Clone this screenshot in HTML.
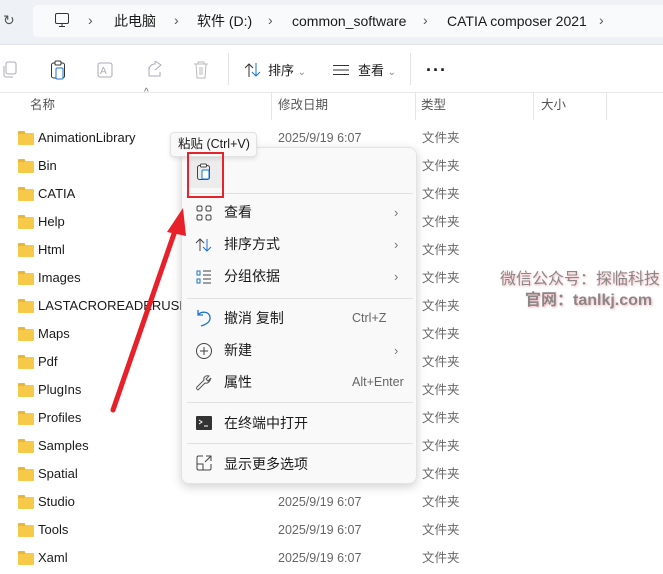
<!DOCTYPE html>
<html><head><meta charset="utf-8"><style>
*{margin:0;padding:0;box-sizing:border-box}
body{width:663px;height:574px;overflow:hidden;background:#fff;font-family:"Liberation Sans","Noto Sans CJK SC",sans-serif;position:relative;color:#1a1a1a}
.abs{position:absolute;white-space:nowrap;line-height:1}
.top{position:absolute;left:0;top:0;width:663px;height:45px;background:#eef2f7;border-bottom:1px solid #dfe3e8}
.crumb{position:absolute;left:33px;top:5px;width:640px;height:32px;background:#f8fafc;border-radius:5px}
.t14{font-size:14px}
.row{position:absolute;left:0;height:28px;width:663px;font-size:13px;line-height:28px}
.row .f{position:absolute;left:18px;top:9px;width:16px;height:12px;background:#f7c948;border-radius:1px}
.row .f:before{content:"";position:absolute;left:0;top:-2px;width:7px;height:3px;background:#eab53a;border-radius:1px 1px 0 0}
.row .n{position:absolute;left:38px;top:0}
.row .d{position:absolute;left:278px;top:0;color:#666;font-size:12.5px}
.row .ty{position:absolute;left:422px;top:0;color:#666;font-size:12.5px}
.menu{position:absolute;left:181px;top:147px;width:236px;height:337px;background:#f9f9f9;border-radius:8px;box-shadow:0 3px 10px rgba(0,0,0,.18);border:1px solid #e3e3e3}
.mi{position:absolute;left:42px;font-size:14px;color:#1a1a1a;line-height:1}
.sc{position:absolute;left:170px;font-size:12.5px;color:#666;line-height:1}
.ch{position:absolute;left:212px;font-size:13px;color:#777;line-height:1}
.sep{position:absolute;left:5px;width:226px;height:1px;background:#e0e0e0}
</style></head><body>
<div class="top"><div class="crumb"></div>
<div class="abs" style="left:3px;top:13px;font-size:14px;color:#555">↻</div>
<svg class="abs" style="left:54px;top:12px" width="16" height="16"><rect x="1.5" y="1.5" width="13" height="10" rx="1.5" fill="none" stroke="#333"/><path d="M5 14.5h6M8 12v2" stroke="#333"/></svg>
<div class="abs t14" style="left:88px;top:13px;color:#555">›</div>
<div class="abs t14" style="left:114px;top:14px">此电脑</div>
<div class="abs t14" style="left:174px;top:13px;color:#555">›</div>
<div class="abs t14" style="left:197px;top:14px">软件 (D:)</div>
<div class="abs t14" style="left:268px;top:13px;color:#555">›</div>
<div class="abs t14" style="left:292px;top:14px">common_software</div>
<div class="abs t14" style="left:423px;top:13px;color:#555">›</div>
<div class="abs t14" style="left:447px;top:14px">CATIA composer 2021</div>
<div class="abs t14" style="left:599px;top:13px;color:#555">›</div>
</div>
<!-- toolbar -->
<svg class="abs" style="left:2px;top:61px" width="16" height="18"><rect x="4" y="1" width="10" height="12" rx="2" fill="none" stroke="#aab"/><path d="M2 5v9a2 2 0 0 0 2 2h7" fill="none" stroke="#aab"/></svg>
<svg class="abs" style="left:50px;top:60px" width="16" height="20"><rect x="1.5" y="3" width="13" height="15" rx="2" fill="none" stroke="#333"/><rect x="5" y="1" width="6" height="4" rx="1" fill="#fff" stroke="#333"/><rect x="6" y="8" width="7" height="11" rx="1" fill="#fff" stroke="#1a73d0"/></svg>
<svg class="abs" style="left:97px;top:61px" width="18" height="18"><rect x="1" y="2" width="14" height="14" rx="2" fill="none" stroke="#aab"/><text x="3" y="13" font-size="10" fill="#aab" font-family="Liberation Sans">A</text></svg>
<svg class="abs" style="left:146px;top:61px" width="18" height="18"><path d="M3 6v9h11v-4M9 9l6-5-6-4v3c-4 0-6 3-6 6" fill="none" stroke="#aab"/></svg>
<svg class="abs" style="left:193px;top:60px" width="16" height="20"><path d="M1 4h14M5 4V2h6v2M3 4l1 14h8l1-14M7 7v8M9 7v8" fill="none" stroke="#bbb"/></svg>
<div class="abs" style="left:228px;top:53px;width:1px;height:32px;background:#e3e3e3"></div>
<svg class="abs" style="left:244px;top:62px" width="18" height="16" fill="none"><path d="M5 15V2M1 6l4-4 4 4" stroke="#333"/><path d="M12 1v13M8 10l4 4 4-4" stroke="#1a73d0"/></svg>
<div class="abs" style="left:268px;top:64px;font-size:13px">排序 <span style="color:#888;font-size:10px">⌄</span></div>
<svg class="abs" style="left:333px;top:64px" width="16" height="12" stroke="#333"><path d="M0 1.5h16M0 6h16M0 10.5h16"/></svg>
<div class="abs" style="left:358px;top:64px;font-size:13px">查看 <span style="color:#888;font-size:10px">⌄</span></div>
<div class="abs" style="left:410px;top:53px;width:1px;height:32px;background:#e3e3e3"></div>
<div class="abs" style="left:426px;top:61px;font-size:18px;font-weight:bold;letter-spacing:1px">···</div>
<div class="abs" style="left:0;top:92px;width:663px;height:1px;background:#e8e8e8"></div>
<!-- header -->
<div class="abs" style="left:144px;top:88px;font-size:10px;color:#666">^</div>
<div class="abs" style="left:30px;top:99px;font-size:12.5px;color:#555">名称</div>
<div class="abs" style="left:278px;top:99px;font-size:12.5px;color:#555">修改日期</div>
<div class="abs" style="left:421px;top:99px;font-size:12.5px;color:#555">类型</div>
<div class="abs" style="left:541px;top:99px;font-size:12.5px;color:#555">大小</div>
<div class="abs" style="left:271px;top:92px;width:1px;height:28px;background:#e5e5e5"></div>
<div class="abs" style="left:415px;top:92px;width:1px;height:28px;background:#e5e5e5"></div>
<div class="abs" style="left:533px;top:92px;width:1px;height:28px;background:#e5e5e5"></div>
<div class="abs" style="left:606px;top:92px;width:1px;height:28px;background:#e5e5e5"></div>
<!-- rows -->
<div class="row" style="top:124px"><div class="f"></div><div class="n">AnimationLibrary</div><div class="d">2025/9/19 6:07</div><div class="ty">文件夹</div></div>
<div class="row" style="top:152px"><div class="f"></div><div class="n">Bin</div><div class="ty">文件夹</div></div>
<div class="row" style="top:180px"><div class="f"></div><div class="n">CATIA</div><div class="ty">文件夹</div></div>
<div class="row" style="top:208px"><div class="f"></div><div class="n">Help</div><div class="ty">文件夹</div></div>
<div class="row" style="top:236px"><div class="f"></div><div class="n">Html</div><div class="ty">文件夹</div></div>
<div class="row" style="top:264px"><div class="f"></div><div class="n">Images</div><div class="ty">文件夹</div></div>
<div class="row" style="top:292px"><div class="f"></div><div class="n">LASTACROREADERUSED</div><div class="ty">文件夹</div></div>
<div class="row" style="top:320px"><div class="f"></div><div class="n">Maps</div><div class="ty">文件夹</div></div>
<div class="row" style="top:348px"><div class="f"></div><div class="n">Pdf</div><div class="ty">文件夹</div></div>
<div class="row" style="top:376px"><div class="f"></div><div class="n">PlugIns</div><div class="ty">文件夹</div></div>
<div class="row" style="top:404px"><div class="f"></div><div class="n">Profiles</div><div class="ty">文件夹</div></div>
<div class="row" style="top:432px"><div class="f"></div><div class="n">Samples</div><div class="ty">文件夹</div></div>
<div class="row" style="top:460px"><div class="f"></div><div class="n">Spatial</div><div class="ty">文件夹</div></div>
<div class="row" style="top:488px"><div class="f"></div><div class="n">Studio</div><div class="d">2025/9/19 6:07</div><div class="ty">文件夹</div></div>
<div class="row" style="top:516px"><div class="f"></div><div class="n">Tools</div><div class="d">2025/9/19 6:07</div><div class="ty">文件夹</div></div>
<div class="row" style="top:544px"><div class="f"></div><div class="n">Xaml</div><div class="d">2025/9/19 6:07</div><div class="ty">文件夹</div></div>
<!-- watermark -->
<div class="abs" style="left:500px;top:272px;font-size:16px;color:#888;text-shadow:1px 1px 2px #f6b0b8">微信公众号：探临科技</div>
<div class="abs" style="left:525px;top:293px;font-size:16px;color:#888;font-weight:bold;text-shadow:1px 1px 2px #f6b0b8">官网：tanlkj.com</div>
<!-- menu -->
<div class="menu">
<div class="abs" style="left:6px;top:8px;width:35px;height:32px;background:#ececec;border-radius:4px"></div>
<svg class="abs" style="left:14px;top:15px" width="16" height="18"><rect x="1.5" y="2.5" width="12" height="14" rx="2" fill="none" stroke="#444"/><rect x="4.5" y="1" width="6" height="3" rx="1" fill="#fff" stroke="#444"/><rect x="6" y="7" width="7" height="9" rx="1" fill="#fff" stroke="#1a73d0"/></svg>
<div class="sep" style="top:45px"></div>
<svg class="abs" style="left:14px;top:57px" width="16" height="16" fill="none" stroke="#444"><rect x="1" y="1" width="5" height="5" rx="1.5"/><rect x="10" y="1" width="5" height="5" rx="1.5"/><rect x="1" y="10" width="5" height="5" rx="1.5"/><rect x="10" y="10" width="5" height="5" rx="1.5"/></svg>
<div class="mi" style="top:57px">查看</div><div class="ch" style="top:58px">›</div>
<svg class="abs" style="left:13px;top:89px" width="18" height="16" fill="none"><path d="M5 14V2M1 6l4-4 4 4" stroke="#444"/><path d="M12 2v12M8 10l4 4 4-4" stroke="#1a73d0"/></svg>
<div class="mi" style="top:89px">排序方式</div><div class="ch" style="top:90px">›</div>
<svg class="abs" style="left:14px;top:121px" width="16" height="16" fill="none"><path d="M1 2h3v4H1zM1 10h3v4H1z" stroke="#1a73d0"/><path d="M7 2h8M7 6h8M7 10h8M7 14h8" stroke="#444"/></svg>
<div class="mi" style="top:121px">分组依据</div><div class="ch" style="top:122px">›</div>
<div class="sep" style="top:150px"></div>
<svg class="abs" style="left:14px;top:161px" width="16" height="18" fill="none" stroke="#1a73d0" stroke-width="1.3"><path d="M2 1v5h5M2 6c3-4 11-4 12 2 1 5-5 8-9 9"/></svg>
<div class="mi" style="top:163px">撤消 复制</div><div class="sc" style="top:164px">Ctrl+Z</div>
<svg class="abs" style="left:13px;top:194px" width="18" height="18" fill="none" stroke="#444"><circle cx="9" cy="9" r="7.5"/><path d="M9 5v8M5 9h8"/></svg>
<div class="mi" style="top:195px">新建</div><div class="ch" style="top:196px">›</div>
<svg class="abs" style="left:13px;top:226px" width="18" height="18" fill="none" stroke="#555"><path d="M16 4l-3 3-2-2 3-3c-3-1-6 1-5 4L2 13c-1 1 0 3 1 3l7-7c3 1 5-2 6-5z"/></svg>
<div class="mi" style="top:227px">属性</div><div class="sc" style="top:228px">Alt+Enter</div>
<div class="sep" style="top:254px"></div>
<svg class="abs" style="left:14px;top:268px" width="16" height="14"><rect width="16" height="14" rx="1" fill="#333"/><path d="M3 4l3 2-3 2M8 10h4" stroke="#fff" fill="none"/></svg>
<div class="mi" style="top:268px">在终端中打开</div>
<div class="sep" style="top:295px"></div>
<svg class="abs" style="left:14px;top:307px" width="16" height="16" fill="none" stroke="#444"><path d="M7 1H2.5A1.5 1.5 0 0 0 1 2.5v11A1.5 1.5 0 0 0 2.5 15h11a1.5 1.5 0 0 0 1.5-1.5V9M1 9h6v6M10 1h5v5M15 1L9 7" /></svg>
<div class="mi" style="top:309px">显示更多选项</div>
</div>
<!-- tooltip -->
<div class="abs" style="left:170px;top:132px;width:87px;height:25px;background:#f9f9f9;border:1px solid #e2e2e2;border-radius:4px;box-shadow:0 2px 4px rgba(0,0,0,.1);font-size:12.5px;padding:5px 0 0 7px;line-height:1">粘贴 (Ctrl+V)</div>
<!-- red box -->
<div class="abs" style="left:187px;top:152px;width:37px;height:46px;border:2px solid #e3242b"></div>
<!-- arrow -->
<svg class="abs" style="left:0;top:0" width="663" height="574"><path d="M113 410L176 228" stroke="#e8202a" stroke-width="5" stroke-linecap="round"/><path d="M183 208L167 232L186 236Z" fill="#e8202a"/></svg>
</body></html>
